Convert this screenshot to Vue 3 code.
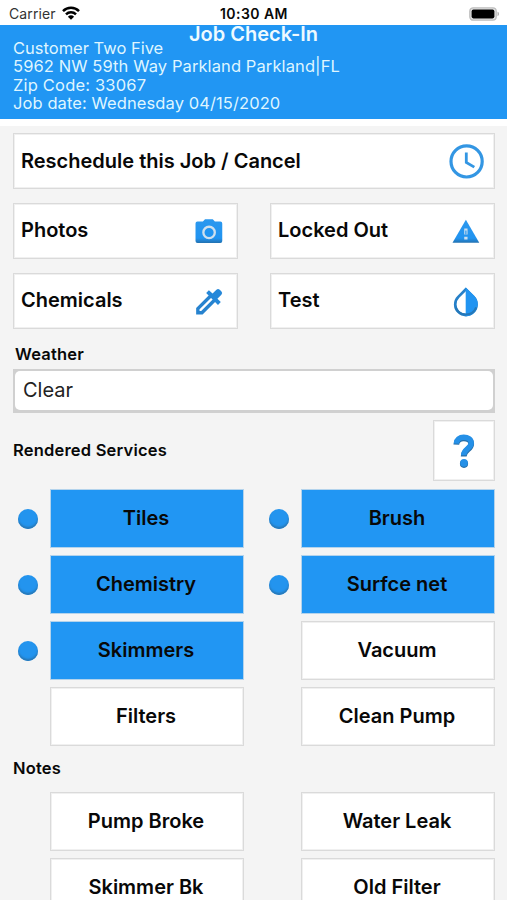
<script setup>
const details = [
  { text: 'Customer Two Five', cls: 'd1' },
  { text: '5962 NW 59th Way Parkland Parkland|FL', cls: 'd2' },
  { text: 'Zip Code: 33067', cls: 'd3' },
  { text: 'Job date: Wednesday 04/15/2020', cls: 'd4' },
]
const actions = [
  { label: 'Photos', icon: 'camera' },
  { label: 'Locked Out', icon: 'warning' },
  { label: 'Chemicals', icon: 'dropper' },
  { label: 'Test', icon: 'drop' },
]
const services = [
  { label: 'Tiles', on: true },
  { label: 'Brush', on: true },
  { label: 'Chemistry', on: true },
  { label: 'Surfce net', on: true },
  { label: 'Skimmers', on: true },
  { label: 'Vacuum', on: false },
  { label: 'Filters', on: false },
  { label: 'Clean Pump', on: false },
]
const notes = ['Pump Broke', 'Water Leak', 'Skimmer Bk', 'Old Filter']
</script>

<template>
  <div class="screen">
    <div class="status">
      <div class="carrier">
        <span>Carrier</span>
        <svg class="wifi" viewBox="0 0 18 14">
          <path d="M1 5.1a11.3 11.3 0 0 1 16 0M4 8.4a7.1 7.1 0 0 1 10 0" fill="none" stroke="#000" stroke-width="2.5" />
          <path d="M5.9 10.7a4.5 4.5 0 0 1 6.2 0L9 13.8z" />
        </svg>
      </div>
      <span class="time">10:30 AM</span>
      <svg class="battery" viewBox="0 0 31 14">
        <rect x="0.8" y="0.8" width="26.4" height="12.4" rx="3.4" fill="#e4e4e4" stroke="#bdbdbd" stroke-width="1.3" />
        <rect x="2.6" y="2.6" width="22.8" height="8.8" rx="1.8" />
        <path d="M28.5 4.8c2 .6 2 3.8 0 4.4z" fill="#b0b0b0" />
      </svg>
    </div>

    <header class="header">
      <h1>Job Check-In</h1>
      <p v-for="d in details" :key="d.cls" :class="d.cls">{{ d.text }}</p>
    </header>

    <main class="body">
      <button class="card wide">
        <span>Reschedule this Job / Cancel</span>
        <svg class="clock" viewBox="0 0 36 36" fill="none" stroke="#3396e3">
          <circle cx="17.6" cy="18.4" r="15.6" stroke-width="3.2" />
          <path d="M17.3 9.6v9.8l8 4.7" stroke-width="2.8" />
        </svg>
      </button>

      <div class="actions">
        <button v-for="a in actions" :key="a.label" class="card">
          <span>{{ a.label }}</span>
          <svg class="icon" viewBox="0 0 32 32">
            <defs>
              <linearGradient id="shade" x1="0" y1="0" x2="0" y2="1">
                <stop offset="0" stop-color="#2b98ee" />
                <stop offset=".8" stop-color="#2194f1" />
                <stop offset="1" stop-color="#2372b1" />
              </linearGradient>
            </defs>
            <template v-if="a.icon === 'camera'">
              <path d="M4.6 5.8h5.6l2.2-2.5h8l2.2 2.5h5.6a2 2 0 0 1 2 2v18a2 2 0 0 1-2 2H4.6a2 2 0 0 1-2-2v-18a2 2 0 0 1 2-2z" fill="url(#shade)" />
              <circle cx="16.6" cy="17" r="5.9" fill="#2094f1" stroke="#cfe0ee" stroke-width="2.4" />
            </template>
            <template v-else-if="a.icon === 'warning'">
              <path d="M16.4 3.8 30.2 27.6H2.6z" fill="url(#shade)" />
              <path d="M16.4 12.8v6.4M16.4 21.4v2.8" stroke="#cfe0ee" stroke-width="3.4" />
              <path d="M16.4 15v4" stroke="#2194f1" stroke-width="1.2" />
            </template>
            <template v-else-if="a.icon === 'dropper'">
              <path d="M18.4 10 5 23.4v4.2h4.2L22.6 14.2" fill="#fff" stroke="#2783cf" stroke-width="3.5" />
              <path d="m13.6 7.2 2.8-2.8 3.8 3.4 4-4q1.7-1.6 3.4.1l1.6 1.6q1.8 1.8.1 3.5l-4.1 4.1 3.5 3.5-2.9 2.9z" fill="#2688d9" />
            </template>
            <template v-else>
              <path d="M16.4 3.4 8.6 11.2a11 11 0 1 0 15.6 0z" fill="#fff" stroke="#2680c9" stroke-width="2.8" />
              <path d="M16.2 1.6 25.2 10.4a12.4 12.4 0 0 1-9 20.8z" fill="#2194f1" />
              <path d="M5.8 22a11.3 11.3 0 0 0 21.2 0" fill="none" stroke="#2478b9" stroke-width="2.2" />
            </template>
          </svg>
        </button>
      </div>

      <div class="label weather">Weather</div>
      <div class="select"><div class="value">Clear</div></div>

      <div class="section">
        <div class="label rendered">Rendered Services</div>
        <button class="card help">
          <svg viewBox="0 0 24 36" fill="none">
            <path d="M4.3 11.6C4.6 7.4 7.7 5.3 11.7 5.3c4.4 0 7.5 2.1 7.5 5.6 0 5.6-7.5 5.7-7.5 12.5" stroke="#276ea7" stroke-width="5.8" />
            <circle cx="12" cy="30.8" r="4.1" fill="#276ea7" />
            <path d="M4.3 10.6C4.6 6.4 7.7 4.3 11.7 4.3c4.4 0 7.5 2.1 7.5 5.6 0 5.6-7.5 5.7-7.5 12.3" stroke="#2590e7" stroke-width="5.4" />
            <circle cx="12" cy="29.9" r="3.8" fill="#2590e7" />
          </svg>
        </button>
      </div>

      <div class="options">
        <div v-for="s in services" :key="s.label" class="option">
          <i class="dot" :class="{ on: s.on }"></i>
          <button class="choice" :class="{ on: s.on }">{{ s.label }}</button>
        </div>
      </div>

      <div class="label notes">Notes</div>
      <div class="options">
        <div v-for="n in notes" :key="n" class="option">
          <i class="dot"></i>
          <button class="choice">{{ n }}</button>
        </div>
      </div>
    </main>
  </div>
</template>

<style>
html, body { margin: 0; overflow: hidden; }
</style>

<style scoped>
* { box-sizing: border-box; }
.screen {
  width: 507px; height: 900px; overflow: hidden; background: #f4f4f4;
  font-family: Inter, "Liberation Sans", sans-serif; color: #080808;
}
button { font: inherit; color: inherit; margin: 0; border-radius: 0; }
.status {
  height: 25px; background: #fff; display: grid; grid-template-columns: 1fr auto 1fr;
  align-items: center; padding: 2px 7px 0 9px;
}
.carrier { display: flex; align-items: center; gap: 6px; font-size: 14px; letter-spacing: .1px; color: #333; }
.wifi { width: 18px; height: 14px; margin-top: -1px; }
.time { font-size: 14px; font-weight: 600; letter-spacing: .45px; margin-right: 1px; }
.battery { width: 31px; height: 14px; justify-self: end; }
.header { height: 94px; background: #2196f3; color: #fff; }
.header h1 {
  margin: 0; height: 14px; line-height: 18px; text-align: center;
  font-size: 20px; font-weight: 600; color: #eefaff;
}
.header p {
  margin: 0; padding-left: 13px; height: 18.4px; line-height: 19px; font-size: 16.5px;
  white-space: nowrap; color: #dff5ff;
}
.header .d2 { letter-spacing: .1px; }
.header .d3 { letter-spacing: .18px; }
.header .d4 { letter-spacing: .09px; }
.body { border-top: 7px solid #fff; padding: 7px 12px 0 13px; }
.card {
  display: flex; align-items: center; justify-content: space-between; height: 56px;
  background: #fff; border: 1px solid #dadada; box-shadow: inset 0 0 0 1px #f0f0f0;
  padding: 0 13px 2px 7px; font-size: 20px; font-weight: 600; white-space: nowrap;
}
.wide { width: 100%; padding: 0 9px 0 7px; }
.clock { width: 36px; height: 36px; }
.icon { width: 31px; height: 31px; margin-top: 3px; overflow: visible; }
.actions {
  display: grid; grid-template-columns: 225px 225px; justify-content: space-between;
  row-gap: 14px; margin-top: 14px;
}
.label { font-size: 16.5px; font-weight: 600; line-height: 20px; letter-spacing: .2px; }
.weather { margin: 15px 0 5px 2px; }
.select { height: 44px; border: 2px solid #d0d0d0; background: #d0d0d0; }
.value {
  height: 39px; border-radius: 5px; background: #fff; padding-left: 8px;
  font-size: 20px; line-height: 39px; color: #222;
}
.section { display: flex; justify-content: space-between; align-items: center; height: 61px; margin-top: 7px; }
.rendered { margin-top: -1px; }
.help { width: 62px; height: 61px; justify-content: center; padding: 0; }
.help svg { width: 24px; height: 36px; }
.options {
  display: grid; grid-template-columns: 231px 231px; justify-content: space-between;
  row-gap: 7px; margin-top: 8px;
}
.option { display: flex; align-items: center; justify-content: space-between; height: 59px; }
.dot { width: 20px; height: 20px; margin: 1px 0 0 5px; border-radius: 50%; }
.dot.on { background: #2394ee; box-shadow: inset 0 -2px 2px #2878b7; }
.choice {
  width: 194px; height: 59px; background: #fff; border: 1px solid #dadada;
  box-shadow: inset 0 0 0 1px #f0f0f0;
  padding: 0 2px 2px 0; font-size: 20px; font-weight: 600; text-align: center;
}
.choice.on { background: #2196f3; border-color: #b3d3ec; box-shadow: none; }
.notes { margin-top: 12px; }
.notes + .options { margin-top: 14px; }
</style>
